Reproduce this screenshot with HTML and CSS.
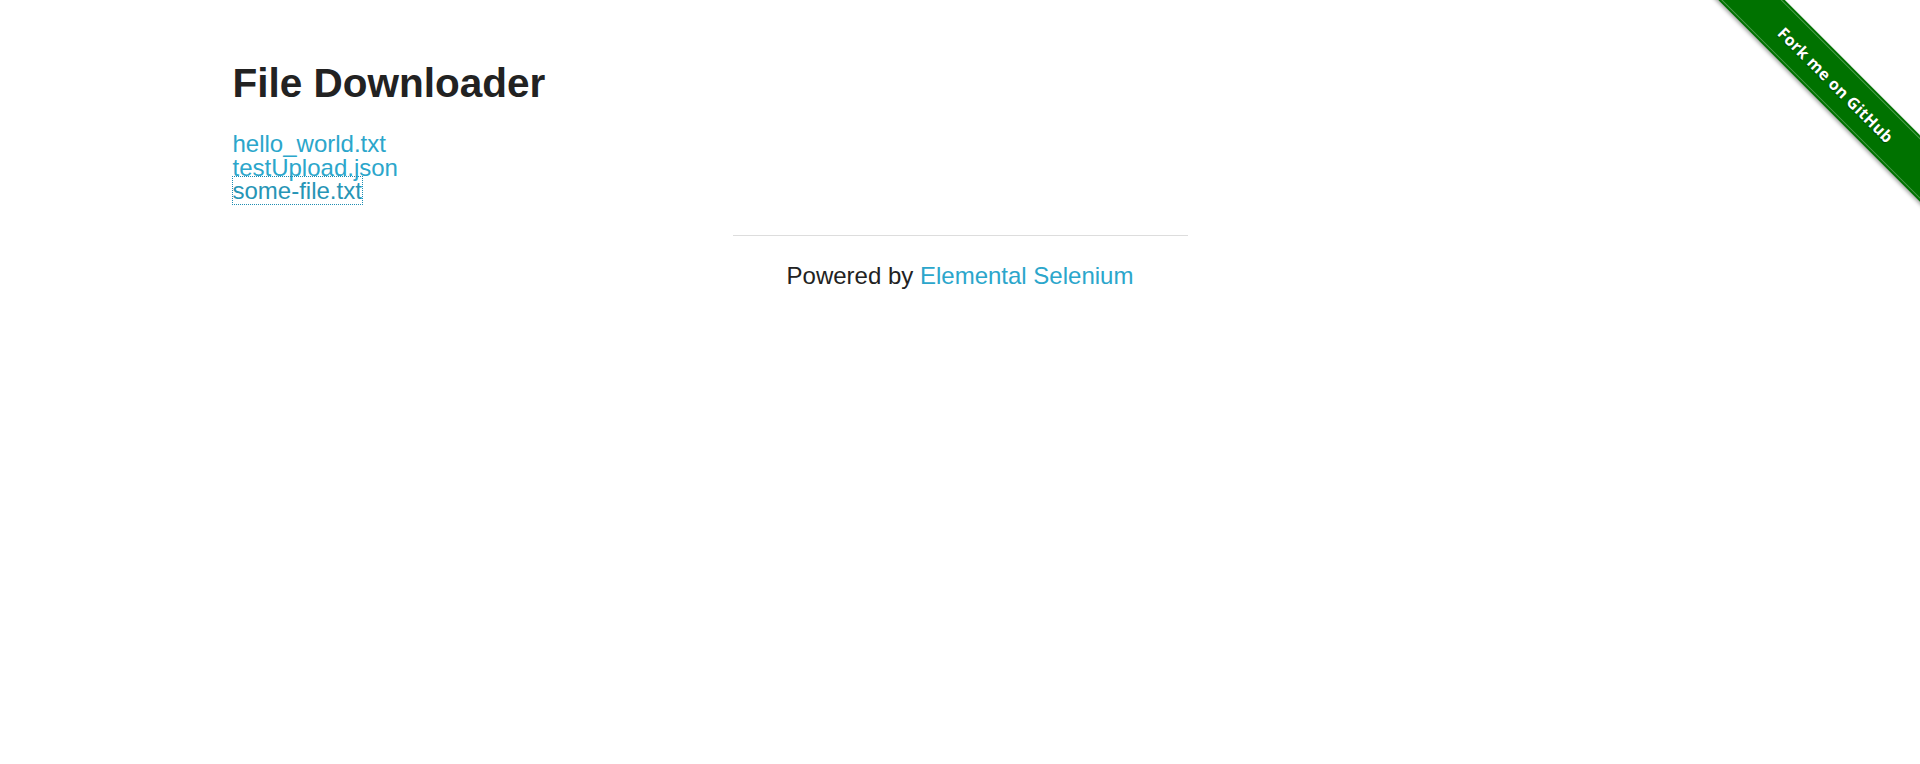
FILE: index.html
```html
<!DOCTYPE html>
<html lang="en">
<head>
<meta charset="utf-8">
<title>The Internet</title>
<link rel="stylesheet" href="styles.css">
</head>
<body>
<a class="ribbon" href="#"><span class="ribbon-band"><span class="ribbon-text">Fork me on GitHub</span></span></a>
<div class="row">
  <div id="content" class="col">
    <div class="example">
      <h3 class="title">File Downloader</h3>
      <a class="file-link" href="#">hello_world.txt</a><br>
      <a class="file-link" href="#">testUpload.json</a><br>
      <a class="file-link focused" href="#">some-file.txt</a><br>
    </div>
  </div>
</div>
<div class="row footer-row">
  <div class="col footer-col">
    <hr class="rule">
    <div class="powered">Powered by <a class="powered-link" href="#">Elemental Selenium</a></div>
  </div>
</div>
</body>
</html>
```

FILE: styles.css
```css
html, body {
  margin: 0;
  padding: 0;
  background: #ffffff;
}

body {
  font-family: "Liberation Sans", Arial, Helvetica, sans-serif;
  font-size: 24px;
  color: #222222;
  position: relative;
  min-height: 764px;
}

.row {
  max-width: 1500px;
  margin: 0 auto;
}

.col {
  padding: 0 22.5px;
}

.title {
  font-size: 40.5px;
  font-weight: bold;
  line-height: 56.7px;
  margin: 55px 0 20.5px;
  color: #222222;
}

.example {
  line-height: 23.4px;
}

.file-link {
  color: #2ba6cb;
  text-decoration: none;
}

.file-link.focused {
  color: #2795b6;
  outline: 1px dotted #1f8db2;
  outline-offset: 0;
}

.footer-col {
  width: 455px;
  margin: 0 auto;
}

.rule {
  border: 0;
  border-top: 1px solid #dddddd;
  height: 0;
  margin: 32.5px 0 22.5px;
}

.powered {
  text-align: center;
  line-height: 36px;
  color: #222222;
}

.powered-link {
  color: #2ba6cb;
  text-decoration: none;
}

.ribbon {
  position: absolute;
  top: 0;
  right: 0;
  width: 220px;
  height: 220px;
  overflow: hidden;
  text-decoration: none;
}

.ribbon-band {
  position: absolute;
  left: -44.25px;
  top: 60.55px;
  width: 360px;
  height: 47.4px;
  transform: rotate(45deg);
  background: #007200;
  box-shadow: 0 2px 4px rgba(0, 0, 0, 0.35);
  display: flex;
  align-items: center;
  justify-content: center;
}

.ribbon-band::before {
  content: "";
  position: absolute;
  left: 0;
  right: 0;
  top: 2px;
  bottom: 2px;
  border-top: 1px solid rgba(255, 255, 255, 0.3);
  border-bottom: 1px solid rgba(255, 255, 255, 0.3);
}

.ribbon-text {
  font-family: "Open Sans", "DejaVu Sans", sans-serif;
  font-weight: 700;
  font-size: 16px;
  color: #ffffff;
  text-shadow: 0 1px 1px rgba(0, 0, 0, 0.45);
  letter-spacing: 0.3px;
}
```
